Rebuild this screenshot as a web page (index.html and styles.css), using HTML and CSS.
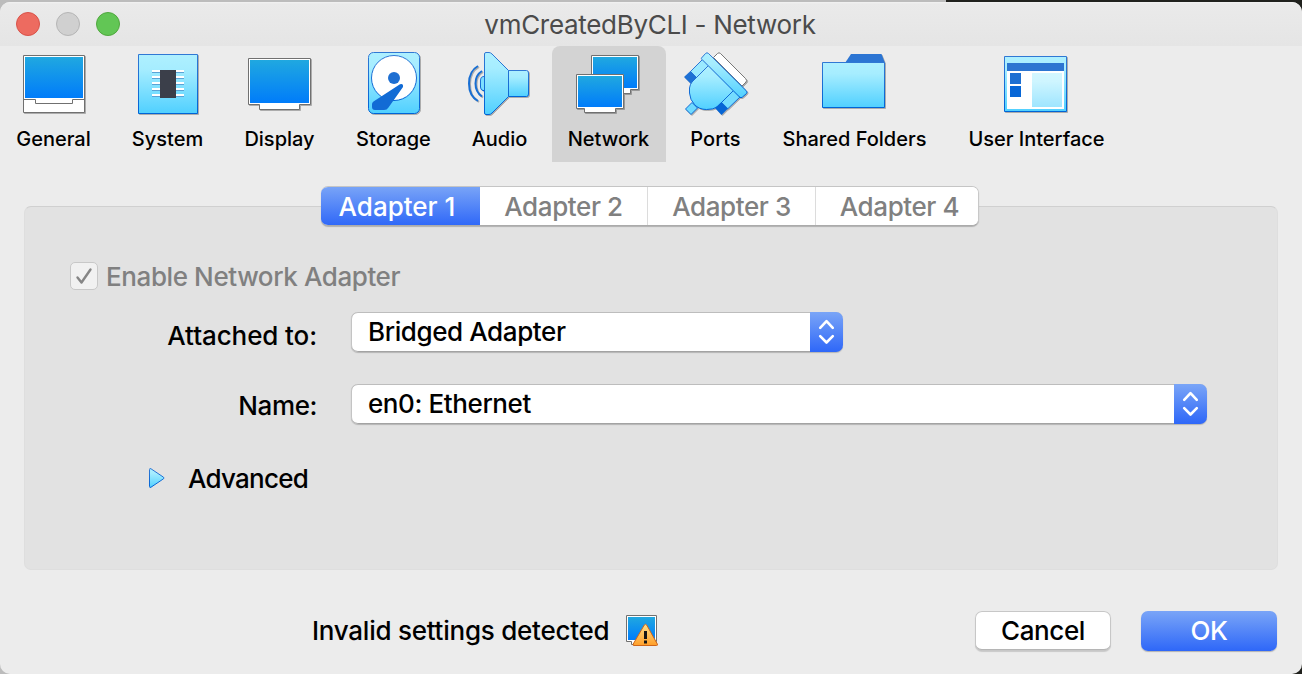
FILE: index.html
```html
<!DOCTYPE html>
<html lang="en">
<head>
<meta charset="utf-8">
<title>vmCreatedByCLI - Network</title>
<link rel="stylesheet" href="styles.css">
</head>
<body>
<svg class="defs" width="0" height="0" aria-hidden="true">
  <defs>
    <linearGradient id="screen" x1="0" y1="0" x2="0" y2="1"><stop offset="0" stop-color="#20a8e0"/><stop offset="1" stop-color="#007cfa"/></linearGradient>
    <linearGradient id="sky" x1="0" y1="0" x2="0" y2="1"><stop offset="0" stop-color="#aef0ff"/><stop offset=".25" stop-color="#a6edff"/><stop offset="1" stop-color="#50d0ff"/></linearGradient>
    <linearGradient id="edge" x1="0" y1="0" x2="0" y2="1"><stop offset="0" stop-color="#3078d4"/><stop offset="1" stop-color="#0064d6"/></linearGradient>
    <linearGradient id="amber" x1="0" y1="0" x2="0" y2="1"><stop offset="0" stop-color="#ffe08a"/><stop offset="1" stop-color="#ff9e28"/></linearGradient>
  </defs>
</svg>
<div class="window">
  <header class="titlebar">
    <div class="lights"><i class="light close"></i><i class="light minimize"></i><i class="light zoom"></i></div>
    <h1 class="title">vmCreatedByCLI - Network</h1>
  </header>

  <nav class="toolbar">
    <a class="tool general">
      <svg class="icon" viewBox="22 50 64 66"><path d="M23.5 55.500H84.500V112.500H23.500Z" fill="#fff" stroke="#707070"/><path d="M25 57H83V98H25Z" fill="url(#screen)"/><path d="M23.500 99.500H35.500V103.500H72.500V99.500H84.500" fill="none" stroke="#707070"/></svg>
      <span class="label">General</span></a>
    <a class="tool system">
      <svg class="icon" viewBox="136 50 64 66"><path d="M138.500 54.500H197.500V113.500H138.500Z" fill="url(#sky)" stroke="url(#edge)"/><path d="M152 71H184M152 77H184M152 83H184M152 89H184M152 95H184" stroke="#fff" stroke-width="2"/><path d="M152 72.500H184M152 78.500H184M152 84.500H184M152 90.500H184M152 96.500H184" stroke="#5ba3d6"/><path d="M160 70H176V98H160Z" fill="#3b3f4a"/></svg>
      <span class="label">System</span></a>
    <a class="tool display">
      <svg class="icon" viewBox="248 50 64 66"><path d="M248.500 58.500H310.500V104.500H299.500V109.500H259.500V104.500H248.500Z" fill="#fff" stroke="#707070"/><path d="M250 60H309V103H250Z" fill="url(#screen)"/></svg>
      <span class="label">Display</span></a>
    <a class="tool storage">
      <svg class="icon" viewBox="362 50 64 66"><rect x="368.500" y="52.500" width="51" height="61" rx="5" fill="url(#sky)" stroke="url(#edge)"/><circle cx="394" cy="78" r="22.500" fill="#fff" stroke="url(#edge)"/><circle cx="394" cy="78" r="6" fill="#1e6fd2"/><path d="M373.500 101.500L400 84.200Q403.500 83 403 87L388.500 107.500Q387 110 384 110H375Q372 110 372 107V104Q372 102.500 373.500 101.500Z" fill="#126bd5"/></svg>
      <span class="label">Storage</span></a>
    <a class="tool audio">
      <svg class="icon" viewBox="468 50 64 66"><path d="M485 76.500H483Q480.500 77 480.500 80V87Q480.500 90 483 90.500H485Z" fill="#7edfff" stroke="url(#edge)"/><path d="M508 70.500H526.500Q528.500 70.500 528.500 73V94Q528.500 96.500 526.500 96.500H508Z" fill="url(#sky)" stroke="url(#edge)"/><path d="M486 52.500H489Q490.500 52.500 492 54L508.500 70.500V96.500L492 113Q490.500 114.500 489 114.500H486Q484.500 114.500 484.500 113V54Q484.500 52.500 486 52.500Z" fill="url(#sky)" stroke="url(#edge)"/><path d="M478 66Q469 71 469 83.500T478 101M482 71Q475.500 75 475.500 83.500T482 96.500" fill="none" stroke="#176ed3" stroke-width="2"/></svg>
      <span class="label">Audio</span></a>
    <a class="tool network selected">
      <svg class="icon" viewBox="577 50 64 66"><path d="M591.500 55.500H638.500V89.500H630.500V93.500H599V89.500H591.500Z" fill="#fff" stroke="#707070"/><path d="M593 57H637V88H593Z" fill="url(#screen)"/><path d="M576.500 74.500H623.500V108.500H615.500V112.500H584.500V108.500H576.500Z" fill="#fff" stroke="#707070"/><path d="M578 76H622V107H578Z" fill="url(#screen)"/></svg>
      <span class="label">Network</span></a>
    <a class="tool ports">
      <svg class="icon" viewBox="684 50 64 66"><path d="M713.500 57.500L717.500 53.500Q719 52 720.500 53.500L745.500 78.500Q747.500 80.500 746 82L742 86Z" fill="#fff" stroke="#777"/><path d="M685.500 109L692 102.500L697.500 108L691 114.500Z" fill="#6fdaff" stroke="#0e69d4"/><path d="M690.500 71.500L702.500 59.500L709 66L697 78Z" fill="#9beaff" stroke="#2c76d4"/><path d="M684 77L690.500 71L697 78L691 84Z" fill="#1e70d4"/><path d="M733.500 90.500L740 97L727.500 109L721 102.500Z" fill="#75dcff" stroke="#126bd4"/><path d="M708.500 65.500L733.500 90.500L717 107Q713.500 109.500 706.500 109.500Q699 109.500 694.500 104.500Q690 100 689.500 93V88Q690 84.500 692 82Z" fill="url(#sky)" stroke="url(#edge)"/><path d="M721.500 102L728 108.500L721.500 115L715 108Z" fill="#0665d5"/><path d="M701.500 58L705.500 53.500Q707 52 708.500 53.500L746 90.500Q748 92 746.500 93.500L742.500 97Q741 98.500 739.500 97L702 59.500Q701 58.500 701.500 58Z" fill="url(#sky)" stroke="url(#edge)"/></svg>
      <span class="label">Ports</span></a>
    <a class="tool folders">
      <svg class="icon" viewBox="823 50 64 66"><path d="M845 63L851 54H881.500L885 63Z" fill="#2c75d3"/><path d="M822.500 62.500H884.500V107.500H822.500Z" fill="url(#sky)" stroke="url(#edge)"/></svg>
      <span class="label">Shared Folders</span></a>
    <a class="tool interface">
      <svg class="icon" viewBox="1005 50 64 66"><path d="M1004.500 56.500H1066.500V111.500H1004.500Z" fill="url(#sky)" stroke="url(#edge)"/><path d="M1007 71H1064V109H1007Z" fill="#fff"/><path d="M1007 63H1064V71H1007Z" fill="#2c75d1"/><path d="M1010 73H1021V84H1010Z" fill="#1d6fd2"/><path d="M1010 86H1021V97H1010Z" fill="#0766d6"/><path d="M1032 73H1062V107H1032Z" fill="url(#sky)" opacity=".55"/></svg>
      <span class="label">User Interface</span></a>
  </nav>

  <main class="content">
    <div class="tabs">
      <button class="tab active"><span class="text">Adapter 1</span></button>
      <button class="tab"><span class="text">Adapter 2</span></button>
      <button class="tab"><span class="text">Adapter 3</span></button>
      <button class="tab last"><span class="text">Adapter 4</span></button>
    </div>
    <section class="panel">
      <div class="enable">
        <span class="checkbox"><svg viewBox="0 0 26 26" width="26" height="26"><path d="M6.500 14.500L10.500 19.500L19.500 6.500" fill="none" stroke="#858585" stroke-width="2.400" stroke-linecap="round" stroke-linejoin="round"/></svg></span>
        <span class="enable-text">Enable Network Adapter</span>
      </div>
      <div class="row attached">
        <span class="row-label attached-label">Attached to:</span>
        <div class="select short"><span class="value bridged">Bridged Adapter</span><span class="stepper"><svg viewBox="0 0 33 40" width="33" height="40"><path d="M10.200 15.800L16.500 9.200L22.800 15.800M10.200 24.200L16.500 30.500L22.800 24.200" fill="none" stroke="#fff" stroke-width="2.600" stroke-linecap="round" stroke-linejoin="round"/></svg></span></div>
      </div>
      <div class="row name">
        <span class="row-label name-label">Name:</span>
        <div class="select long"><span class="value ethernet">en0: Ethernet</span><span class="stepper"><svg viewBox="0 0 33 40" width="33" height="40"><path d="M10.200 15.800L16.500 9.200L22.800 15.800M10.200 24.200L16.500 30.500L22.800 24.200" fill="none" stroke="#fff" stroke-width="2.600" stroke-linecap="round" stroke-linejoin="round"/></svg></span></div>
      </div>
      <div class="advanced">
        <svg class="disclosure" viewBox="0 0 16 20" width="16" height="20"><path d="M.5 1.500Q.5 0 2 .8L14.500 9.200Q15.500 10 14.500 10.800L2 19.200Q.5 20 .5 18.500Z" fill="url(#sky)" stroke="url(#edge)"/></svg>
        <span class="advanced-text">Advanced</span>
      </div>
    </section>
  </main>

  <footer class="footer">
    <span class="status">Invalid settings detected</span>
    <svg class="warning" viewBox="626 614 34 34" width="34" height="34"><path d="M626.500 615.500H656.500V641.500H650V644.500H631.500V641.500H626.500Z" fill="#fff" stroke="#707070"/><path d="M628 617H655V640H628Z" fill="url(#screen)"/><path d="M644.300 625Q645.500 623.500 646.700 625L657.300 644Q658 645.500 656.500 645.500H634Q632.500 645.500 633.200 644Z" fill="url(#amber)" stroke="#cf6518"/><path d="M645.500 631V639M645.500 640.500V643.500" stroke="#151515" stroke-width="3"/></svg>
    <button class="button cancel"><span class="text">Cancel</span></button>
    <button class="button ok"><span class="text">OK</span></button>
  </footer>
</div>
</body>
</html>
```
FILE: styles.css
```css
* { box-sizing: border-box; }
html, body { margin: 0; width: 1302px; height: 674px; overflow: hidden; }
body {
  padding-top: 2px;
  background: linear-gradient(90deg, #bcbcbc 0 946px, #20211d 946px);
  font: 450 26px/32px Inter, "Liberation Sans", sans-serif;
  color: #000;
}
.defs { display: block; height: 0; }
.window { height: 672px; display: flex; flex-direction: column; overflow: hidden; border-radius: 10px; background: #ececec; }
span, h1 { white-space: nowrap; }

.titlebar { flex: none; height: 44px; display: grid; grid-template-columns: 1fr auto 1fr; align-items: center; background: linear-gradient(#f2f2f2, #eaeaea 2px, #e5e5e5); }
.lights { display: flex; gap: 16px; padding-left: 16px; }
.light { width: 24px; height: 24px; border-radius: 50%; border: 1px solid; }
.close { background: #ed6b60; border-color: #d85249; }
.minimize { background: #d0d0d0; border-color: #b5b5b5; }
.zoom { background: #62c655; border-color: #50a73e; }
.title { margin: 0; padding: 1px 2px 0 0; font-size: 26px; line-height: 32px; font-weight: 400; color: #4b4b4b; letter-spacing: -.3px; }

.toolbar { flex: none; height: 116px; display: flex; }
.tool { flex: none; display: flex; flex-direction: column; align-items: center; padding-top: 4px; }
.icon { flex: none; width: 64px; height: 66px; overflow: visible; filter: drop-shadow(1px 1px 0 rgba(0, 0, 0, .27)); }
.label { font-size: 20px; line-height: 24px; font-weight: 500; margin-top: 11px; padding-right: 1px; letter-spacing: 0; }
.general { width: 108px; }
.system { width: 120px; }
.display { width: 104px; }
.storage { width: 124px; }
.audio { width: 88px; }
.network { width: 114px; margin-left: 8px; }
.ports { width: 100px; }
.folders { width: 178px; }
.interface { width: 186px; }
.selected { background: #d3d3d3; border-radius: 8px 8px 0 0; }

.content { flex: none; height: 408px; padding: 24px 24px 0; }
.tabs { position: relative; z-index: 1; width: 658px; height: 40px; margin-left: 297px; display: flex; border-radius: 7px; overflow: hidden; background: #fff; box-shadow: 0 1px 1px rgba(0, 0, 0, .22); border: 1px solid; border-color: #c5c5c5 #c8c8c8 #ababab; border-left: 0; }
.tab { width: 168px; margin: 0; padding: 2px 0 0; border: 0; border-right: 1px solid #dcdcdc; background: #fff; color: #808080; font: inherit; }
.tab.active { width: 159px; margin: -1px 0; padding-right: 7px; border: 0; color: #fff; background: linear-gradient(#7aa5f7, #2e67f8); }
.tab.last { flex: 1; padding-left: 5px; border: 0; }
.panel { height: 364px; margin-top: -20px; padding-top: 55px; background: #e2e2e2; border: 1px solid #dedede; border-top-color: #d0d0d0; border-radius: 7px; }
.enable { height: 28px; margin-left: 45px; display: flex; align-items: center; gap: 8px; color: #808080; }
.enable-text { padding-top: 2px; }
.checkbox { width: 28px; height: 28px; border: 1px solid #c8c8c8; border-radius: 5px; background: #f1f1f1; }
.checkbox svg { display: block; }
.row { display: flex; height: 40px; }
.attached { margin-top: 22px; }
.name { margin-top: 32px; }
.row-label { width: 292px; margin-right: 34px; padding-top: 8px; text-align: right; }
.name-label { padding-top: 6px; }
.select { height: 40px; display: flex; overflow: hidden; border-radius: 7px; background: #fff; box-shadow: inset 0 1px #bdbdbd, inset 1px 0 #c4c4c4, inset 0 -1px #a3a3a3, 0 1px 1px rgba(0, 0, 0, .2); }
.short { width: 492px; }
.long { width: 856px; }
.value { flex: 1; padding: 4px 0 0 17px; }
.stepper { width: 33px; background: linear-gradient(#7aa5f7, #2e67f8); }
.stepper svg { display: block; }
.advanced { display: flex; align-items: center; height: 32px; margin: 38px 0 0 124px; }
.disclosure { margin-right: 23px; }

.footer { flex: none; display: flex; height: 40px; margin-top: 40px; padding: 2px 25px 0 312px; align-items: center; }
.status { width: 314px; }
.warning { flex: none; }
.button { width: 136px; height: 40px; padding: 0; border: 0; border-radius: 7px; font: inherit; flex: none; }
.cancel { margin-left: auto; color: #000; background: #fff; box-shadow: inset 0 0 0 1px #c7c7c7, inset 0 -2px #b5b5b5, 0 1px 1px rgba(0, 0, 0, .15); }
.ok { margin-left: 30px; color: #fff; background: linear-gradient(#7aa5f7, #2e67f8); box-shadow: 0 1px 1px rgba(0, 0, 0, .25); }
.text, .enable-text, .row-label, .value, .advanced-text, .status { letter-spacing: -.4px; }
.active .text { letter-spacing: 0; }
.attached-label { letter-spacing: -.1px; }
.advanced-text { padding-top: 2px; letter-spacing: -.75px; }
.status { letter-spacing: -.25px; }
```
